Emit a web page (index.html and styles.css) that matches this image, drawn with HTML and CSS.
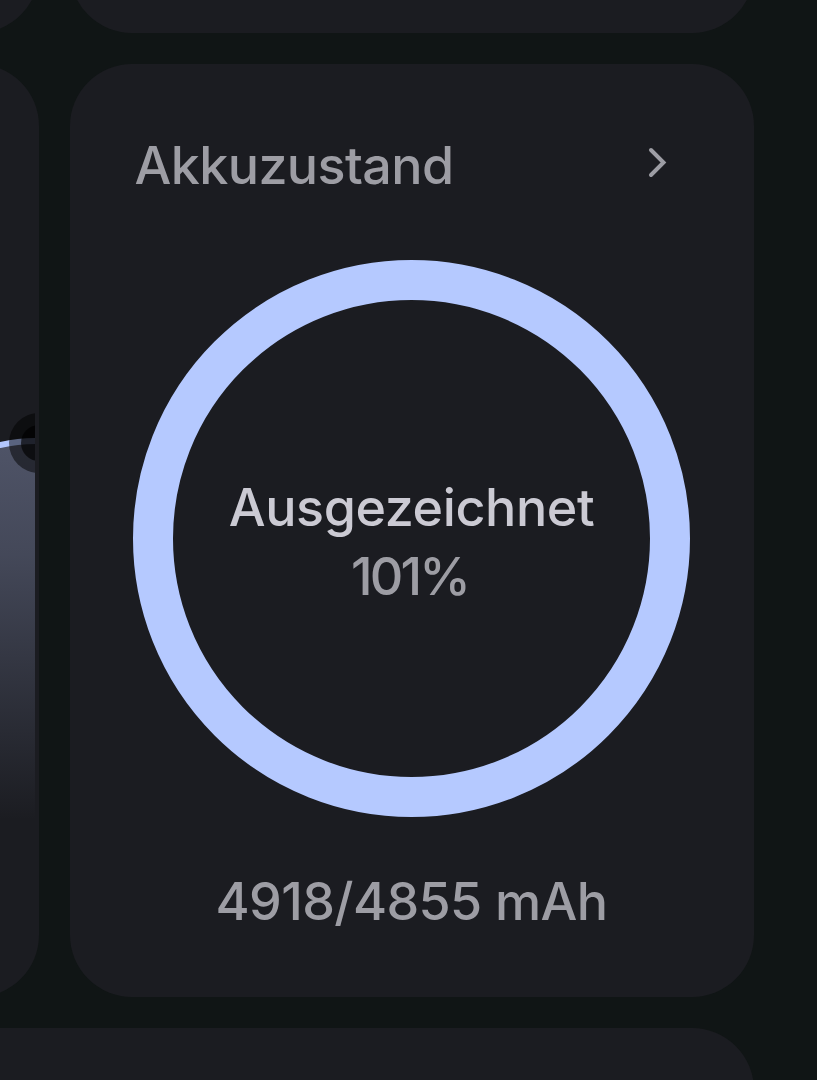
FILE: index.html
```html
<!DOCTYPE html>
<html lang="de">
<head>
  <meta charset="UTF-8">
  <meta name="viewport" content="width=device-width, initial-scale=1.0">
  <title>Akkuzustand</title>
  <link rel="stylesheet" href="styles.css">
</head>
<body>

  <div class="screen">
    <div class="grid">
      <div class="card"></div>
      <div class="card"></div>

      <div class="card chart-card">
        <svg class="chart" width="120" height="420" viewBox="0 0 120 420">
          <defs>
            <linearGradient id="area" x1="0" y1="0" x2="0" y2="1">
              <stop offset="0" stop-color="#b3c0f0" stop-opacity="0.34"/>
              <stop offset="0.3" stop-color="#b3c0f0" stop-opacity="0.27"/>
              <stop offset="1" stop-color="#b3c0f0" stop-opacity="0"/>
            </linearGradient>
          </defs>
          <path d="M0 60 L85 45 Q103 42 120 41 V420 H0 Z" fill="url(#area)"/>
          <path d="M0 64 L85 45 Q103 41 120 41" fill="none" stroke="#b3c7ff" stroke-width="6"/>
          <circle cx="124" cy="43" r="30" fill="#000" fill-opacity="0.5"/>
          <circle cx="124" cy="43" r="18" fill="#000" fill-opacity="0.65"/>
        </svg>
      </div>

      <div class="card health-card">
        <div class="header">
          <span class="title">Akkuzustand</span>
          <svg class="arrow" width="20" height="32" viewBox="0 0 20 32">
            <path d="M4 4 L16.5 16.5 L4 29" fill="none" stroke="#9d9da4" stroke-width="4" stroke-linecap="round"/>
          </svg>
        </div>
        <div class="ring">
          <span class="status">Ausgezeichnet</span>
          <span class="percent">101%</span>
        </div>
        <div class="capacity">4918/4855 mAh</div>
      </div>

      <div class="card wide"></div>
    </div>
  </div>

</body>
</html>
```

FILE: styles.css
```css
body {
  margin: 0;
  background-color: #101515;
  font-family: Inter, Roboto, sans-serif;
  font-weight: 500;
  color: #9d9da4;
}
.screen {
  display: flow-root;
  height: 1080px;
  overflow: hidden;
}
.grid {
  display: grid;
  grid-template-columns: 684px 684px;
  grid-template-rows: 200px 933px 200px;
  gap: 31px;
  width: 1399px;
  margin: -167px 0 0 -645.5px;
}
.card {
  background-color: #1b1c21;
  border-radius: 62px;
  box-sizing: border-box;
}
.wide {
  grid-column: 1 / 3;
}
.chart-card {
  display: flex;
  justify-content: flex-end;
  align-items: flex-start;
  padding: 336px 4px 0 0;
}
.health-card {
  display: flex;
  flex-direction: column;
  align-items: center;
  padding: 70px 64px 0;
}
.header {
  display: flex;
  justify-content: space-between;
  align-items: center;
  width: 100%;
  height: 64px;
  box-sizing: border-box;
  padding: 0 23px 0 1px;
}
.title {
  font-size: 52px;
  line-height: 64px;
  letter-spacing: -0.6px;
}
.arrow {
  margin-bottom: 8px;
}
.ring {
  display: flex;
  flex-direction: column;
  align-items: center;
  justify-content: center;
  width: 557px;
  height: 557px;
  margin-top: 62px;
  box-sizing: border-box;
  padding-top: 6px;
  border: 40px solid #b5c9ff;
  border-radius: 50%;
  line-height: 69px;
  font-size: 52px;
}
.status {
  color: #cbcad3;
  letter-spacing: -0.4px;
}
.percent {
  margin-right: 4px;
  letter-spacing: -2.8px;
}
.capacity {
  margin-top: 53px;
  font-size: 52px;
  line-height: 64px;
  letter-spacing: -0.6px;
}
```
